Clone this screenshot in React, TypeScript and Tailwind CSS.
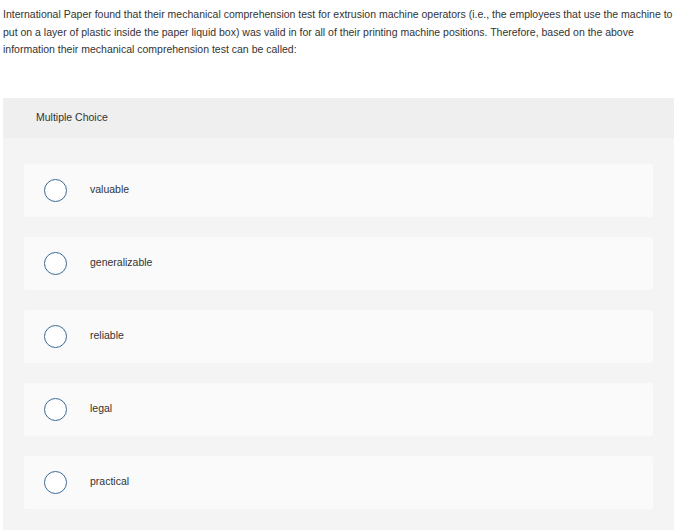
const options = ["valuable", "generalizable", "reliable", "legal", "practical"]

function Radio() {
  return <span className="block w-[23px] h-[23px] rounded-full border-[1.5px] border-[#3c6a96] bg-white shrink-0" />
}

export default function App() {
  return (
    <div className="w-[691px] h-[530px] overflow-hidden bg-white text-[#333] font-['Liberation_Sans',Arial,sans-serif]">
      <p className="pl-[3px] pr-[6px] pt-[6px] text-[10.5px] leading-[17.5px]">
        International Paper found that their mechanical comprehension test for extrusion machine operators (i.e., the employees that use the machine to put on a layer of plastic inside the paper liquid box) was valid in for all of their printing machine positions. Therefore, based on the above information their mechanical comprehension test can be called:
      </p>
      <div className="ml-[3px] mr-[17px] mt-[39px] bg-[#f4f4f4] pb-[40px]">
        <div className="h-[40px] bg-[#efefef] flex items-center pl-[33px] text-[10.5px]">
          Multiple Choice
        </div>
        <div className="px-[21px] pt-[26px] flex flex-col gap-[20px]">
          {options.map((o) => (
            <div key={o} className="h-[53px] bg-[#fafafa] rounded-[3px] flex items-center pl-[20px]">
              <Radio />
              <span className="ml-[23px] text-[10.5px]">{o}</span>
            </div>
          ))}
        </div>
      </div>
    </div>
  )
}
